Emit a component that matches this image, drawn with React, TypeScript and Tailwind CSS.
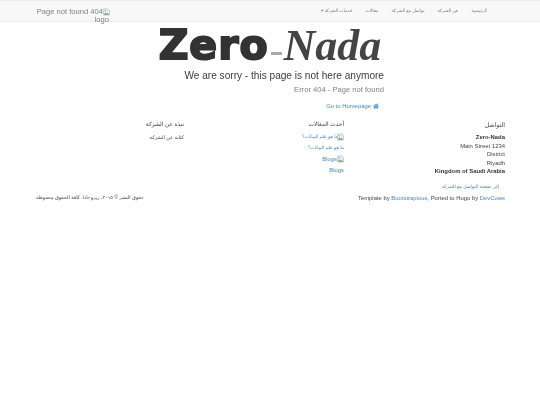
const sans = { fontFamily: '"Liberation Sans", "Noto Sans", "DejaVu Sans", sans-serif' };

const navLinks = ['الرئيسية', 'عن الشركة', 'تواصل مع الشركة', 'مقالات'];

// the broken image placeholder the browser shows when a file is missing
const BrokenImage = () => (
  <svg viewBox="0 0 8 8" className="h-[8px] w-[7px] shrink-0">
    <path d="M0.5 0.5h5l2 2v5h-7z" fill="#e8eef0" stroke="#a9b4b8" strokeWidth="0.7" />
    <path d="M1 7l2-2.5 1.5 1.5 1-1 1.5 2z" fill="#6ea56a" />
    <circle cx="2.5" cy="2.5" r="0.9" fill="#8db4e0" />
  </svg>
);

const HomeGlyph = () => (
  <svg viewBox="0 0 12 12" className="h-[6px] w-[6px] fill-[#4a86bd]">
    <path d="M6 1 0 6.5l1 1L6 3l5 4.5 1-1-2-1.8V1.5H8.5v1.8z" />
    <path d="M2 8 6 4.3 10 8v3.5H7.2V8.8H4.8v2.7H2z" />
  </svg>
);

export default function App() {
  return (
    <div className="min-h-[405px] bg-white text-[#444]" style={sans}>
      {/* Navbar */}
      <nav className="h-[22px] border-y border-[#ececec] bg-[#f8f8f8]">
        <div className="mx-auto flex w-[470px] items-start justify-between [will-change:transform]">
          <div className="flex w-[75px] flex-col items-end pt-[6.5px] text-right text-[7.6px] leading-[8.5px] text-[#808080]">
            <div className="flex items-center">
              <span className="whitespace-nowrap">Page not found 404</span>
              <BrokenImage />
            </div>
            <span className="pr-[1px]">logo</span>
          </div>
          <div dir="rtl" className="mr-[18px] flex gap-[13px] pt-[6px] text-[4.5px] leading-[8px] text-[#808080]">
            {navLinks.map((link) => (
              <span key={link}>{link}</span>
            ))}
            <span dir="rtl">خدمات الشركة ▾</span>
          </div>
        </div>
      </nav>

      {/* 404 message */}
      <section className="mx-auto flex w-[228px] flex-col items-end pt-[2px] [will-change:transform]">
        <div className="flex h-[43px] w-[228px] items-end justify-center whitespace-nowrap">
          <span className="text-[41px] leading-[43px] font-bold tracking-[1px] text-[#333] [-webkit-text-stroke:2px_#333]" style={{ fontFamily: '"DejaVu Sans", sans-serif' }}>
            Zero
          </span>
          <span className="mx-[2px] mb-[12px] h-[3px] w-[11px] bg-[#aaa]" />
          <span className="text-[44px] leading-[43px] font-bold text-[#444] italic" style={{ fontFamily: '"Liberation Serif", serif' }}>
            Nada
          </span>
        </div>
        <h1 className="mt-[3px] whitespace-nowrap text-[10.1px] leading-[12px] text-[#3c3c3c]">We are sorry - this page is not here anymore</h1>
        <h2 className="mt-[2px] whitespace-nowrap text-[7.6px] leading-[12px] text-[#808080]">Error 404 - Page not found</h2>
        <a className="mt-[5px] mr-[5px] flex items-center gap-[2px] text-[5.9px] leading-[10px] text-[#4a86bd]">
          Go to Homepage
          <HomeGlyph />
        </a>
      </section>

      {/* Footer columns */}
      <footer className="mx-auto mt-[10px] w-[470px] [will-change:transform]">
        <div dir="rtl" className="grid grid-cols-[161px_160px_149px]">
          <div className="text-right">
            <h3 className="-mt-[1px] text-[6.2px] leading-[9px] text-[#444]">التواصل</h3>
            <address className="mt-[4px] text-[5.9px] leading-[8.5px] text-[#444] not-italic" dir="ltr">
              <strong className="text-[#333]">Zero-Nada</strong>
              <br />
              Main Street 1234
              <br />
              District
              <br />
              Riyadh
              <br />
              <strong className="text-[#333]">Kingdom of Saudi Arabia</strong>
            </address>
            <a className="mt-[7px] mr-[6px] block text-[4.6px] leading-[8px] text-[#4a86bd]">إلى صفحة التواصل مع الشركة</a>
          </div>
          <div className="text-right">
            <h3 className="-mt-[1px] text-[5.8px] leading-[9px] text-[#444]">أحدث المقالات</h3>
            <div className="mt-[4px] flex flex-col gap-[3px] text-[#4a86bd]">
              <div className="flex items-center text-[4.6px] leading-[8px]">
                <BrokenImage />
                <span className="-mr-[1px]">ما هو علم البيانات؟</span>
              </div>
              <div className="text-[4.6px] leading-[8px]">ما هو علم البيانات؟</div>
              <div className="flex items-center text-[5.9px] leading-[8px]">
                <BrokenImage />
                <span>Blogs</span>
              </div>
              <div className="text-[5.9px] leading-[8px]">Blogs</div>
            </div>
          </div>
          <div className="text-right">
            <h3 className="-mt-[1px] text-[5.8px] leading-[9px] text-[#444]">نبذة عن الشركة</h3>
            <p className="mt-[4px] text-[5px] leading-[8px] text-[#444]">كتابة عن الشركة.</p>
          </div>
        </div>
        <div dir="rtl" className="mt-[3px] flex items-center justify-between leading-[8px]">
          <p dir="ltr" className="text-[5.9px] text-[#444]">
            Template by <a className="text-[#4a86bd]">Bootstrapious</a>, Ported to Hugo by <a className="text-[#4a86bd]">DevCows</a>
          </p>
          <p className="text-[4.9px] text-[#444]">حقوق النشر © ٢٠١٥، زيرو-نادا. كافة الحقوق محفوظة.</p>
        </div>
      </footer>
    </div>
  );
}
